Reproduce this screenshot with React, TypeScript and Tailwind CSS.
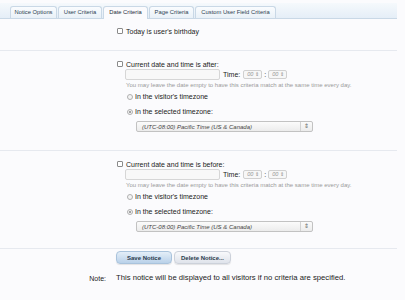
import React from "react";

function Check({ label }: { label: string }) {
  return (
    <div className="flex items-center h-[8px]">
      <span className="w-[6px] h-[6px] border border-[#8a8a8a] bg-white rounded-[1px] shrink-0" />
      <span className="ml-[3px] text-[7px] leading-none text-[#222]">{label}</span>
    </div>
  );
}

function Radio({ label, on }: { label: string; on?: boolean }) {
  return (
    <div className="flex items-center h-[9px] pl-[10px]">
      <span className="w-[6px] h-[6px] rounded-full border border-[#b0b0b0] bg-[#f4f4f4] flex items-center justify-center shrink-0">
        {on && <span className="w-[2px] h-[2px] rounded-full bg-[#8a8a8a]" />}
      </span>
      <span className="ml-[2px] text-[7px] leading-none text-[#222]">{label}</span>
    </div>
  );
}

function Spin() {
  return (
    <div className="w-[19px] h-[9px] border border-[#d0d0d0] bg-[#f7f7f7] rounded-[2px] flex items-center">
      <span className="text-[5.5px] italic text-[#999] leading-none pl-[3px]">00</span>
      <span className="ml-auto mr-[2px] text-[5px] text-[#888] leading-none">⇕</span>
    </div>
  );
}

function Section({ h, label }: { h: string; label: string }) {
  return (
    <div className={`${h} pl-[117px] pt-[9px] flex flex-col`}>
      <Check label={label} />
      <div className="mt-[1px] h-[11px] flex items-center pl-[8px]">
        <div className="w-[95px] h-[11px] border border-[#d6d6d6] bg-[#f8f8f8] rounded-[2px]" />
        <span className="ml-[3px] text-[7px] leading-none text-[#222]">Time:</span>
        <div className="ml-[3px]"><Spin /></div>
        <span className="mx-[2px] text-[7px] leading-none text-[#222]">:</span>
        <Spin />
      </div>
      <div className="h-[10px] flex items-center pl-[9px] text-[6px] leading-none text-[#9a9a9a] whitespace-nowrap">
        You may leave the date empty to have this criteria match at the same time every day.
      </div>
      <div className="mt-[2px]"><Radio label="In the visitor's timezone" /></div>
      <div className="mt-[6px]"><Radio label="In the selected timezone:" on /></div>
      <div className="mt-[5px] ml-[19px] w-[177px] h-[11px] border border-[#c2c2c2] rounded-[2px] bg-linear-to-b from-[#fbfbfb] to-[#ececec] flex items-center">
        <span className="pl-[5px] text-[6px] italic leading-none text-[#444]">(UTC-08:00) Pacific Time (US &amp; Canada)</span>
        <span className="ml-auto h-full w-[12px] border-l border-[#d2d2d2] flex items-center justify-center text-[5.5px] text-[#666] leading-none">⇕</span>
      </div>
    </div>
  );
}

const Sep = () => <div className="h-px w-[397px] bg-[#e6e9ef]" />;

export default function App() {
  const tabs = [
    { t: "Notice Options", w: "w-[47px]" },
    { t: "User Criteria", w: "w-[44px]" },
    { t: "Date Criteria", w: "w-[45px]", a: true },
    { t: "Page Criteria", w: "w-[45px]" },
    { t: "Custom User Field Criteria", w: "w-[81px]" },
  ];
  return (
    <div className="w-[405px] h-[300px] overflow-hidden bg-[#fbfbfd] font-['Liberation_Sans',Arial,sans-serif]">
      <div className="mt-[3px] w-[397px] h-[16px] bg-linear-to-b from-[#f5f9fc] to-[#e5eef7] border-b border-[#c9d8e6] flex items-end pl-[10px]">
        {tabs.map((tb, i) => (
          <div
            key={i}
            className={
              tb.a
                ? `${tb.w} h-[13px] -mb-px ml-px rounded-t-[3px] border border-b-0 border-[#c9d8e6] bg-[#fbfbfd] flex items-center justify-center text-[5.8px] leading-none text-[#1f2d3a]`
                : `${tb.w} h-[12px] ${i === 0 ? "" : "ml-px"} rounded-t-[3px] border border-b-0 border-[#c9d8e6] bg-linear-to-b from-[#fafcfe] to-[#e9f1f8] flex items-center justify-center text-[5.8px] leading-none text-[#2c3e50]`
            }
          >
            {tb.t}
          </div>
        ))}
      </div>
      <div className="h-[31px] pl-[117px] pt-[8px]">
        <Check label="Today is user's birthday" />
      </div>
      <Sep />
      <Section h="h-[99px]" label="Current date and time is after:" />
      <Sep />
      <Section h="h-[97px]" label="Current date and time is before:" />
      <Sep />
      <div className="mt-[2px] pl-[116px] flex gap-[2px]">
        <div className="w-[56px] h-[13px] rounded-[4px] border border-[#a9c3dc] bg-linear-to-b from-[#e4eef8] to-[#b9d1e9] flex items-center justify-center text-[6px] font-bold text-[#2a3a4c] leading-none shadow-[0_1px_1px_rgba(0,0,0,0.1)]">
          Save Notice
        </div>
        <div className="w-[57px] h-[13px] rounded-[4px] border border-[#ccd1da] bg-linear-to-b from-[#f8f9fb] to-[#dfe3eb] flex items-center justify-center text-[6px] font-bold text-[#2a3a4c] leading-none shadow-[0_1px_1px_rgba(0,0,0,0.1)]">
          Delete Notice...
        </div>
      </div>
      <div className="mt-[9px] h-[10px] flex items-center leading-none text-[#222]">
        <span className="w-[106px] text-right text-[7px]">Note:</span>
        <span className="ml-[10px] text-[7.7px]">This notice will be displayed to all visitors if no criteria are specified.</span>
      </div>
    </div>
  );
}
